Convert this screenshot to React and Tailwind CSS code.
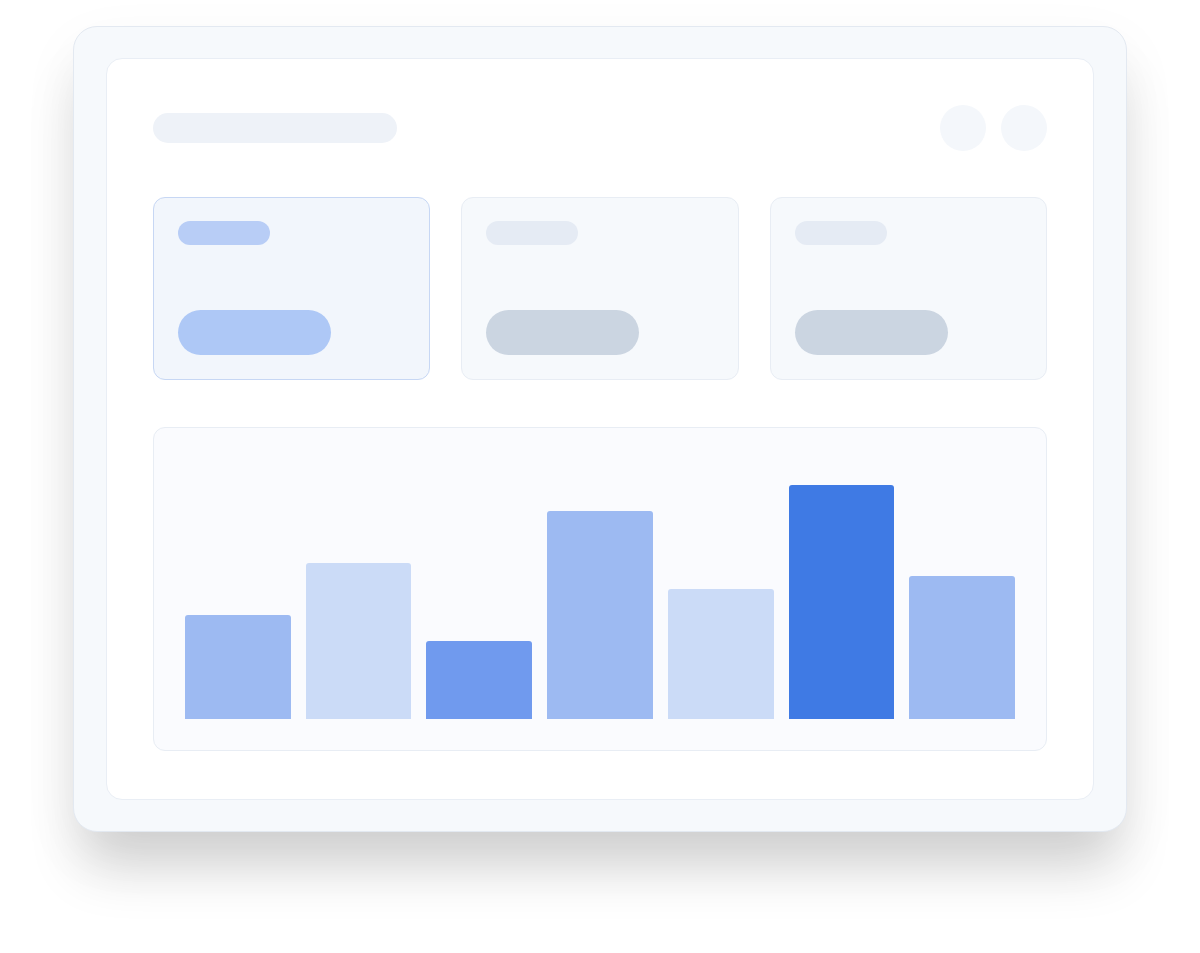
const bars = [
  { h: 104, color: 'bg-[#9dbaf2]' },
  { h: 156, color: 'bg-[#cbdbf7]' },
  { h: 78, color: 'bg-[#709aee]' },
  { h: 208, color: 'bg-[#9dbaf2]' },
  { h: 130, color: 'bg-[#cbdbf7]' },
  { h: 234, color: 'bg-[#3f7ae4]' },
  { h: 143, color: 'bg-[#9dbaf2]' },
];

const cards = [
  { active: true },
  { active: false },
  { active: false },
];

export default function App() {
  return (
    <div className="min-h-[953px] w-full bg-white flex justify-center pt-[26px]">
      {/* Outer device frame */}
      <div className="w-[1054px] h-[806px] rounded-[24px] bg-[#f6f9fc] border border-[#e3e9f1] px-[32px] py-[31px] shadow-[0_45px_55px_-10px_rgba(0,0,0,0.16),0_20px_60px_rgba(0,0,0,0.05)]">
        {/* Inner panel */}
        <div className="h-full rounded-[16px] bg-white border border-[#e9eef5] px-[46px] pt-[46px]">
          {/* Header */}
          <div className="flex items-center justify-between h-[46px]">
            <div className="w-[244px] h-[30px] rounded-full bg-[#eef2f8]" />
            <div className="flex gap-[15px]">
              <div className="w-[46px] h-[46px] rounded-full bg-[#f4f7fb]" />
              <div className="w-[46px] h-[46px] rounded-full bg-[#f4f7fb]" />
            </div>
          </div>

          {/* Cards */}
          <div className="grid grid-cols-3 gap-[31px] mt-[46px]">
            {cards.map((c, i) => (
              <div
                key={i}
                className={
                  c.active
                    ? 'h-[183px] rounded-[12px] border border-[#c7d7f4] bg-[#f2f6fc] px-[24px] pt-[23px]'
                    : 'h-[183px] rounded-[12px] border border-[#e8edf4] bg-[#f6f9fc] px-[24px] pt-[23px]'
                }
              >
                <div
                  className={
                    c.active
                      ? 'w-[92px] h-[24px] rounded-full bg-[#b8cdf6]'
                      : 'w-[92px] h-[24px] rounded-full bg-[#e5ebf4]'
                  }
                />
                <div
                  className={
                    c.active
                      ? 'w-[153px] h-[45px] rounded-full bg-[#aec8f6] mt-[65px]'
                      : 'w-[153px] h-[45px] rounded-full bg-[#cbd5e1] mt-[65px]'
                  }
                />
              </div>
            ))}
          </div>

          {/* Chart */}
          <div className="mt-[47px] h-[324px] rounded-[12px] border border-[#e8edf4] bg-[#fafbfe] px-[31px] pb-[31px] flex items-end gap-[15px]">
            {bars.map((b, i) => (
              <div
                key={i}
                className={`flex-1 rounded-t-[3px] ${b.color}`}
                style={{ height: b.h }}
              />
            ))}
          </div>
        </div>
      </div>
    </div>
  );
}
